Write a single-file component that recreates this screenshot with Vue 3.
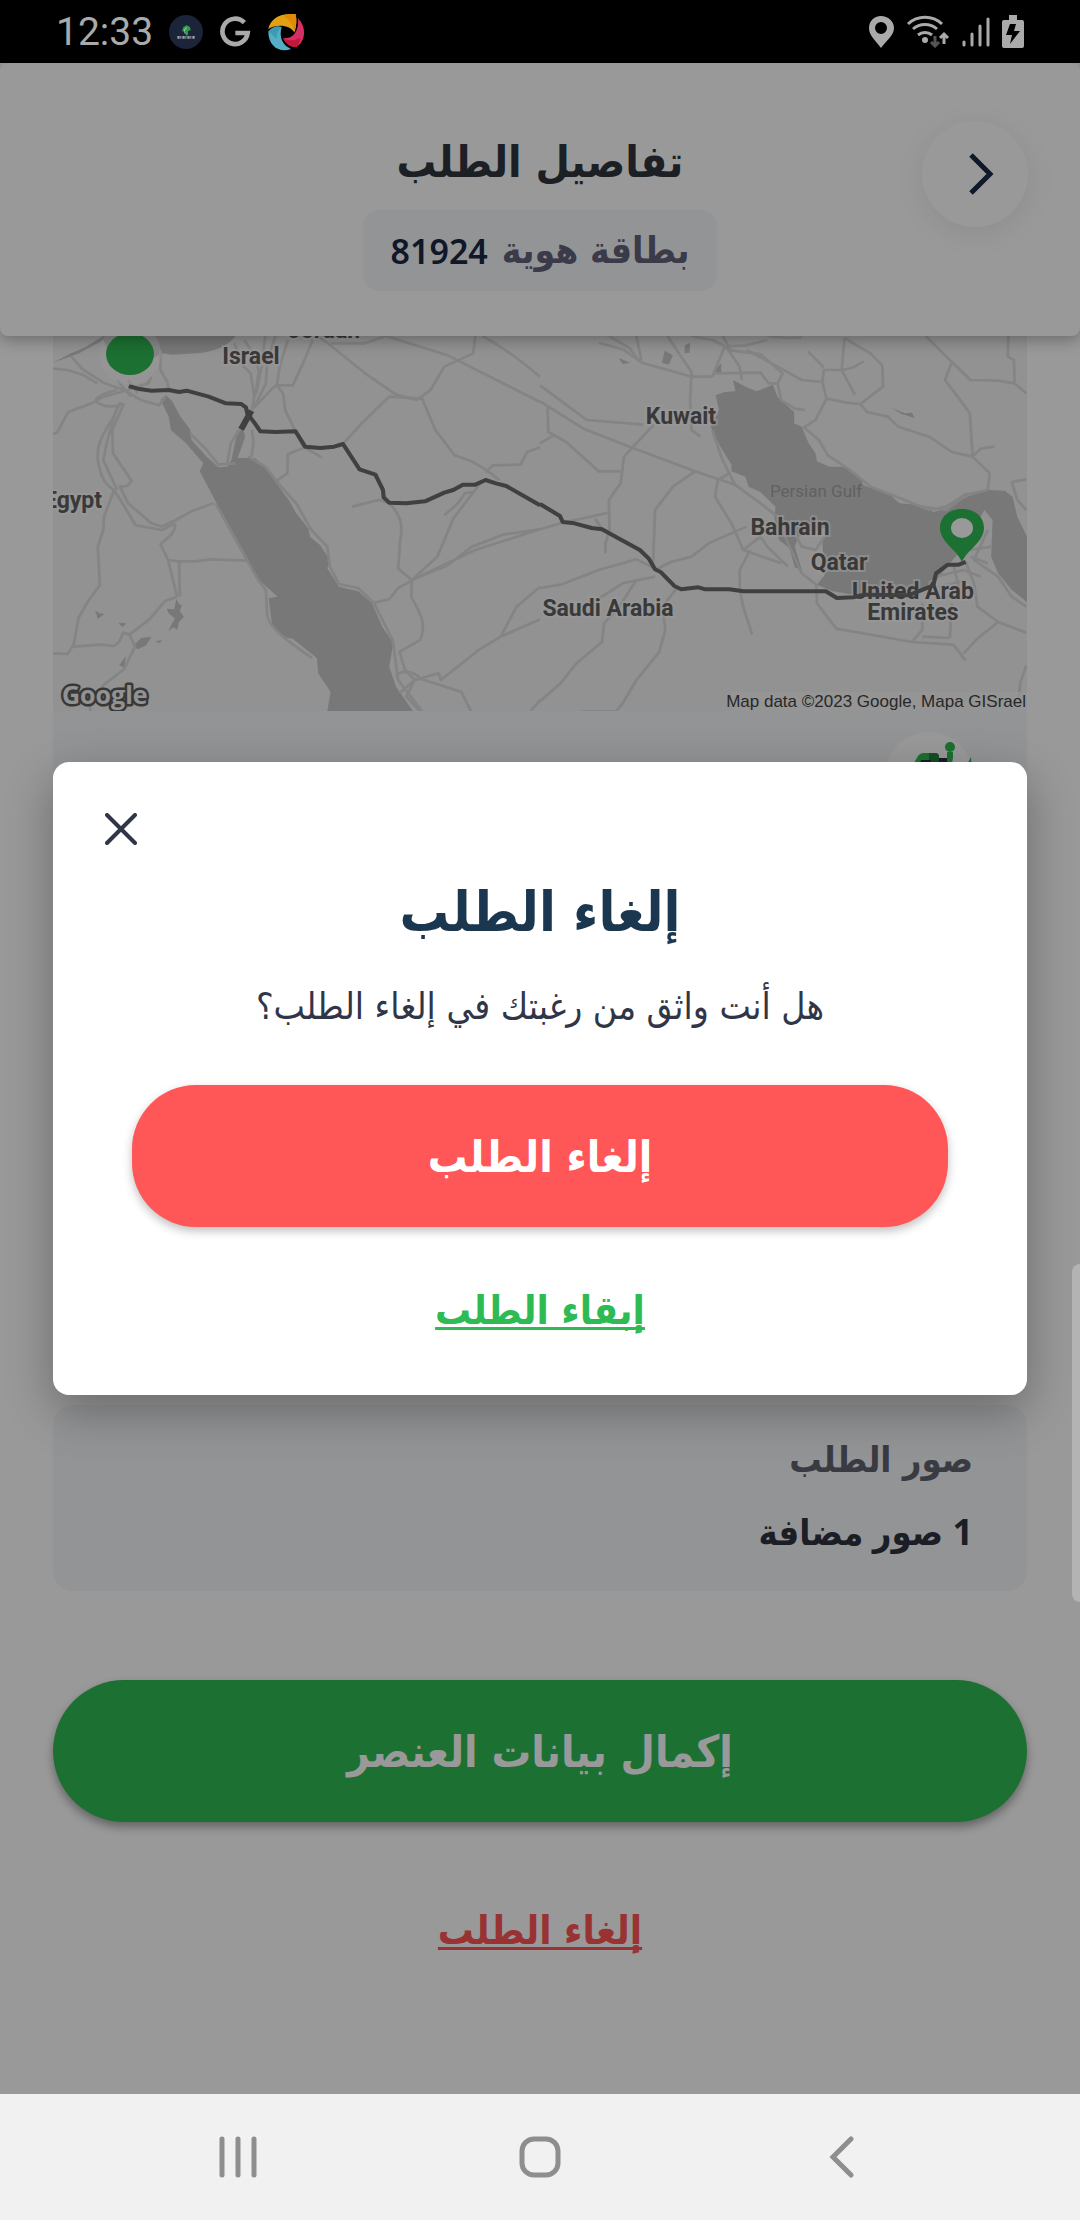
<script setup>
import { ref } from 'vue'

const time = '12:33'
const orderId = '81924'
const modalOpen = ref(true)

const westRoads = [
  'M154 116 L196 120 L240 134 L282 160',
  'M206 78 L240 118 L300 158 L360 180',
  'M340 180 C300 190 270 205 280 215 C300 232 330 232 360 222',
  'M154 312 L166 308 L198 246 L270 218 L300 200 L372 180 L430 160 L440 140',
  'M360 180 L408 210 L462 226 L480 200 M372 150 L400 190 M340 150 L380 200',
  'M466 60 L466 120 L486 156 L490 180',
  'M350 215 L330 262 C300 310 280 340 284 390 C290 430 300 460 330 480 L350 510 L394 586 L470 600 L508 580',
  'M360 220 L326 300 L328 370 L382 452 L370 468 L348 470 L372 520 L440 580 L470 590',
  'M340 230 L312 330 L300 390 L322 440 L340 480',
  'M330 484 L302 560 L300 600 L284 650 L290 766 L258 810 L228 864 L214 944 L196 972 L154 970',
  'M214 950 L290 944 L330 948 L346 936 L358 908 L376 914 L436 866 L480 812 L514 800',
  'M376 914 L392 950 L360 1018 L300 1066 L262 1120 L262 1145',
  'M508 580 C512 610 480 630 466 642 L488 690 L520 694 L522 800 M488 690 L500 740 L514 800',
  'M520 694 L566 694 L612 688 L718 692',
  'M470 590 L510 570 L560 542 L620 520',
  'M680 40 L708 110 L728 130 L738 200 L732 240 M710 30 L740 80 L752 124 L740 200',
  'M770 18 L760 110 L744 190 M800 18 L776 90 L772 160 L738 232 L800 166 L850 166 L880 100 L908 30',
  'M836 30 L812 110 L804 166 L822 190 L828 240 L856 300',
  'M960 40 L1060 40 L1120 18 L1300 76 L1568 216',
  'M920 18 L950 38 L1060 130 L1150 194 L1210 210 L1250 180 L1290 110 L1374 70 L1380 18',
  'M1400 18 C1460 50 1510 90 1568 140',
  'M996 342 L1050 280 L1130 200 L1226 206 L1264 300 L1320 376 L1370 394 L1412 420 L1450 450',
  'M1410 428 L1430 406 L1512 404 L1530 366 L1568 352',
  'M660 400 L670 340 L694 300 M732 300 L736 340 L730 380',
  'M856 300 L880 350 L934 382 M886 352 L836 372 L834 430 L804 452',
  'M552 310 L600 360 L634 404 L684 400',
  'M720 380 L770 410 L816 470 L860 520 L904 600 L950 650 L958 710 L984 762 L1040 774 L1086 820 L1140 930 L1156 1050 L1226 1145',
  'M1022 530 L1100 510 L1130 520 C1160 550 1172 580 1162 630 L1156 716 L1196 750 L1270 680 L1316 566 L1400 452',
  'M1290 556 L1330 520 L1350 490 L1370 486',
  'M1196 750 L1300 706 L1370 650 L1460 614 L1568 598 M1196 750 L1380 660 L1568 598',
  'M1088 818 L1130 808 L1156 774 L1196 752 L1194 800 C1220 850 1240 880 1220 930 L1160 966 L1176 1020 L1204 1050',
  'M1540 1145 L1568 1110 M1454 920 L1500 830 L1568 770 M1568 868 L1454 920 L1390 960 L1280 1050 L1274 1030 L1204 1050',
  'M1150 1040 C1160 1020 1200 1020 1220 1046 L1340 1086 L1368 1145 M1160 1090 L1204 1050 L1180 1100 L1220 1145',
  'M626 520 L690 640 L750 750 L772 780 L776 860 C790 900 830 930 906 984'
]

const eastRoads = [
  'M170 38 L240 58 L300 100 L380 122 L440 140 L500 140',
  'M200 18 L260 54 L290 96 M280 18 L294 90 M370 18 L410 80 L440 126 L436 210 L440 300 L466 320',
  'M440 18 L500 30 L540 50 L580 110 L586 150 M530 18 L556 62 L640 72 L704 130 L690 160',
  'M500 140 L536 50 L600 46 L660 30 M500 130 L640 128 L664 160 L690 160',
  'M600 60 L690 110 L760 150 L820 156 L824 120 L880 120 L910 112 L940 94',
  'M660 18 L720 24 L760 22 M778 64 L824 112 M884 24 L876 120 L914 194',
  'M884 24 L960 70 L994 106 L996 170 L930 222 L890 218 L832 206 L820 156',
  'M930 222 L950 246 L1010 260 L1040 290 L1130 320 L1196 366 L1256 380 L1280 356 L1320 350',
  'M1120 18 L1196 96 L1176 150 L1220 210 L1248 250 L1256 380 L1306 430 L1300 480',
  'M1196 96 L1250 150 L1330 152 L1378 160 L1376 90 L1358 80 L1360 18 M1378 160 L1412 190',
  'M832 206 L800 270 L766 292 L810 330 L836 376 L900 420 L960 470 L1050 506 L1130 540 L1180 530 L1240 490',
  'M690 160 L700 210 L740 236 L770 240 M1412 448 L1370 456 L1386 510 L1412 540',
  'M0 166 L136 270 L300 284 M0 214 L130 298 L270 354 L450 424 L566 464',
  'M22 230 L24 306 L76 336 L170 424 L234 424 M0 340 L40 316',
  'M330 284 L244 380 L234 460 L200 510 L202 600 L190 640 L190 670',
  'M450 424 L386 470 L334 540 L328 710 M0 598 L60 580 L200 548',
  'M160 566 L186 606 M0 774 L60 764 L170 720 L280 688 L334 716 M334 740 L240 760 L174 804',
  'M334 720 L380 696 L440 680 L490 640 L600 590 M550 430 L516 450 L508 500 L556 580 L590 660 L700 700',
  'M500 300 L530 390 L566 464 L640 520 L690 560 L720 640 L760 730 L804 766',
  'M590 660 L640 620 L660 650 L720 710 M580 780 L580 720 L610 660',
  'M580 780 L590 830 L616 914 M280 750 L230 830 L186 880 L180 936 L106 1000 L60 1060 L0 1114',
  'M400 770 L356 830 L364 900 L346 966 L280 1050 L240 1120 L220 1145 L120 1145',
  'M802 766 L804 820 L860 896 L1080 936 L1200 944 L1236 992',
  'M1080 936 L1110 900 L1110 820 M1190 924 L1196 820 M1110 920 L1190 924 M1230 970 L1270 926 L1330 876 L1412 908',
  'M1300 480 L1240 494 L1180 540 L1110 530',
  'M1236 696 L1260 760 L1270 830 L1330 876 M1300 600 L1260 690 L1330 740 L1370 800 L1412 830',
  'M1150 740 L1230 720 L1280 740 M1160 770 L1240 750 M1200 700 L1220 790 L1180 800 M1250 660 L1310 650 M1250 680 L1300 700',
  'M740 610 L760 650 L800 660 L826 620 M1412 1006 L1394 1060 L1390 1110'
]

const labels = [
  { text: 'Jordan', x: 271, y: 2 },
  { text: 'Israel', x: 198, y: 28 },
  { text: 'Egypt', x: 20, y: 172 },
  { text: 'Kuwait', x: 628, y: 88 },
  { text: 'Bahrain', x: 737, y: 199 },
  { text: 'Qatar', x: 786, y: 234 },
  { text: 'Saudi Arabia', x: 555, y: 280 },
  { text: 'United Arab', x: 860, y: 263 },
  { text: 'Emirates', x: 860, y: 284 }
]
</script>

<template>
  <div class="phone">
    <div class="status">
      <div class="status-side">
        <span class="time">{{ time }}</span>
        <svg width="34" height="34" viewBox="27 30 102 102" aria-hidden="true">
          <circle cx="78" cy="81" r="51" fill="#1b2438" />
          <path d="M66 78 L70 66 L80 61 L90 66 L92 76 L84 78 L84 90 L78 92 L76 76 L70 80Z" fill="#2f9c4b" />
          <path d="M80 68 C74 70 72 78 76 86" stroke="#c9ccd2" stroke-width="3" fill="none" />
          <path d="M52 97 H104" stroke="#9a9fab" stroke-width="8" stroke-dasharray="7 2 3 3" />
        </svg>
        <svg width="32" height="32" viewBox="180 32 94 96" aria-hidden="true">
          <path d="M255 52 A38 38 0 1 0 265 83 H228" fill="none" stroke="#aaa" stroke-width="14" />
        </svg>
        <svg width="38" height="38" viewBox="320 22 114 114" aria-hidden="true">
          <path d="M324 70 C330 38 362 20 406 26 C410 46 408 62 402 80 C392 60 352 52 324 70Z" fill="#e2a112" />
          <path d="M370 30 C384 24 396 24 406 26 C410 46 408 62 402 80 C398 58 388 44 370 30Z" fill="#e28a08" />
          <path d="M413 38 C440 64 436 108 408 124 C392 126 376 114 368 98 C400 100 416 76 413 38Z" fill="#d62f63" />
          <path d="M368 98 C384 108 404 104 420 96 C418 110 414 118 408 124 C392 126 376 114 368 98Z" fill="#c2183e" />
          <path d="M324 78 C336 62 352 60 364 64 C356 92 364 118 392 130 C360 142 324 124 324 78Z" fill="#55aec6" />
          <path d="M324 78 C336 62 352 60 364 64 C356 70 350 80 348 100 C340 90 334 84 324 78Z" fill="#3e9ab4" />
        </svg>
      </div>
      <div class="status-side status-right">
        <svg width="27" height="32" viewBox="0 0 27 32" aria-hidden="true">
          <path fill-rule="evenodd" fill="#aaa" d="M13 0 C6 0 1 5 1 12 C1 19 6 23 13 32 C20 23 26 19 26 12 C26 5 20 0 13 0Z M13 6 A6 6 0 1 1 13 18 A6 6 0 1 1 13 6Z" />
        </svg>
        <svg width="43" height="33" viewBox="0 0 43 33" fill="none" aria-hidden="true">
          <g stroke="#aaa" stroke-width="3">
            <path d="M1 9 A25 25 0 0 1 35 9" />
            <path d="M6 14 A18 18 0 0 1 30 14" />
            <path d="M11 20 A11 11 0 0 1 25 20" />
            <path d="M37 29 V19 M33 23 L37 19 L41 23" />
          </g>
          <circle cx="18" cy="25" r="3" fill="#aaa" />
          <path d="M28 21 V30 M24 27 L28 31 L32 27" stroke="#555" stroke-width="3" />
        </svg>
        <svg width="28" height="32" viewBox="0 0 28 32" stroke="#aaa" stroke-width="3" stroke-linecap="round" aria-hidden="true">
          <path d="M2 26 V29 M10 18 V29 M18 10 V29 M26 3 V29" />
        </svg>
        <svg width="22" height="33" viewBox="0 0 22 33" aria-hidden="true">
          <path fill="#aaa" d="M7 0 H15 V5 H20 Q22 5 22 7 V31 Q22 33 20 33 H2 Q0 33 0 31 V7 Q0 5 2 5 H7Z" />
          <path fill="#000" d="M8 9 H14 L12 16 H18 L8 29 L10 20 H4Z" />
        </svg>
      </div>
    </div>

    <div class="stage" dir="rtl">
      <header class="header">
        <button class="back" type="button" aria-label="رجوع">
          <svg width="26" height="42" viewBox="0 0 26 42" fill="none" stroke="#1b2a45" stroke-width="5">
            <path d="M3 2 L22 21 L3 40" />
          </svg>
        </button>
        <div class="heading">
          <h1 class="title">تفاصيل الطلب</h1>
          <p class="chip"><span>بطاقة هوية</span><strong>{{ orderId }}</strong></p>
        </div>
      </header>

      <main class="content">
        <section class="trip">
          <svg class="map" viewBox="0 0 974 375" role="img" aria-label="Map">
            <rect width="974" height="375" fill="#f3f3f3" />
            <g transform="translate(-53 -6) scale(.3444 .3333)">
              <path fill="#c8c8c8" d="M154 98 L206 70 L250 50 L300 18 H684 C660 50 620 66 570 70 L500 74 L470 70 L400 110 L330 90 L300 30 L230 70Z" />
              <path fill="#c8c8c8" d="M466 210 L482 196 L500 214 L524 260 L552 298 L556 330 L600 380 L634 412 L660 410 L672 390 L686 320 L704 290 L712 320 L690 384 L740 384 L770 410 L800 456 L840 512 L860 550 L896 596 L900 620 L930 646 L960 694 L950 714 L984 770 L1040 784 L1080 820 L1110 890 L1142 940 L1130 1010 L1150 1070 L1200 1145 H950 L960 1086 L924 1030 L920 984 L850 926 L826 922 L790 884 L780 804 L806 800 L746 744 L716 680 L626 514 L580 424 L590 400 L540 340 L496 300 L490 260Z" />
              <path fill="#c8c8c8" d="M484 836 L506 838 L512 806 L520 822 L528 826 L522 844 L534 860 L520 876 L514 900 L504 892 L488 904 L500 880 L508 866 L490 850Z M388 946 L410 924 L440 920 L424 946 L400 958Z M450 934 L470 930 L464 940Z M346 1006 L366 978 L360 1012Z M276 840 L288 850 L304 852 L284 866Z M344 878 L366 880 L356 892Z" />
              <g fill="none" stroke="#dcdcdc" stroke-width="8" stroke-linejoin="round">
                <path v-for="(d, i) in westRoads" :key="i" :d="d" />
              </g>
            </g>
            <g transform="translate(487 -6) scale(.3444 .3333)">
              <path fill="#c8c8c8" d="M510 196 L536 186 L568 184 L560 150 L600 172 L630 184 L676 164 L690 200 L738 246 L738 280 L760 290 L780 340 L800 370 L804 394 L840 410 L880 410 L936 450 L936 464 L1020 498 L1044 520 L1110 526 L1142 546 L1180 536 L1240 500 L1300 480 L1350 482 L1372 500 L1386 560 L1414 620 V816 L1370 780 L1330 730 L1310 680 L1314 570 L1290 540 L1240 640 L1190 700 L1144 760 L1100 790 L980 806 L850 784 L804 764 L826 736 L820 640 L836 590 L800 600 L750 620 L740 650 L760 720 L740 712 L724 654 L694 630 L680 560 L684 530 L640 486 L606 470 L596 440 L556 424 L556 404 L524 350 L496 290 L520 240Z" />
              <path fill="#c8c8c8" d="M228 84 L262 98 L240 102Z M362 62 L386 76 L374 104 L354 98Z M420 46 L436 38 L434 68 L420 70Z M1020 234 L1060 250 L1080 248 L1088 264 L1050 252Z M500 130 L526 100 L526 130Z" />
              <g fill="none" stroke="#dcdcdc" stroke-width="8" stroke-linejoin="round">
                <path v-for="(d, i) in eastRoads" :key="i" :d="d" />
              </g>
            </g>
            <text class="sea" x="763" y="161">Persian Gulf</text>
            <g class="places">
              <text v-for="l in labels" :key="l.text" :x="l.x" :y="l.y">{{ l.text }}</text>
            </g>
            <g fill="none" stroke="#6b6b6b" stroke-width="12" stroke-linejoin="round">
              <g transform="translate(-53 -6) scale(.3444 .3333)">
                <path d="M374 168 L400 176 L440 182 L490 180 L520 186 L542 182 L606 200 L656 220 L700 222 L714 232 L718 250 L740 280 L756 304 L800 306 L858 304 L886 350 L930 354 L970 350 L996 342 L1044 418 L1090 434 L1112 480 L1114 502 L1130 518 L1180 520 L1234 514 L1290 488 L1316 480 L1344 464 L1380 464 L1410 450 L1440 460 L1470 468 L1568 526" />
                <path d="M730 242 L700 298" stroke-width="18" />
              </g>
              <path transform="translate(487 -6) scale(.3444 .3333)" d="M0 522 L58 558 L66 576 L100 580 L150 594 L180 598 L230 626 L290 660 L316 686 L334 718 L350 726 L390 768 L410 778 L460 772 L480 778 L550 778 L590 784 L830 784 L862 804 L910 802 L940 794 L1070 796 L1142 766 L1150 730 L1184 704 L1216 704 L1236 696" />
            </g>
            <circle cx="77" cy="18" r="31" fill="#fff" opacity=".4" />
            <ellipse cx="77" cy="18" rx="24" ry="21" fill="#2fbb53" />
            <path fill="#2fbb53" fill-rule="evenodd" d="M909 226 C904 214 887 206 887 192 C887 180 897 173 909 173 C921 173 931 180 931 192 C931 206 914 214 909 226Z" />
            <ellipse cx="909" cy="192" rx="11" ry="10" fill="#fff" />
            <text class="brand" x="9" y="368">Google</text>
            <rect x="678" y="356" width="296" height="19" fill="#fff" opacity=".5" />
            <text class="credit" x="973" y="371">Map data ©2023 Google, Mapa GISrael</text>
          </svg>
          <div class="trip-body">
            <svg class="vehicle" width="88" height="88" viewBox="0 0 88 88" aria-hidden="true">
              <circle cx="44" cy="44" r="44" fill="#fff" />
              <path d="M26 36 L33 24 Q35 21 39 21 H50 Q54 21 54 25 V50 H26Z" fill="#2fbb53" />
              <path d="M44 21 H50 Q54 21 54 25 V36 H44Z" fill="#26803d" />
              <path d="M36 28 H46 V36 H34Z M54 26 H62 V36 H54Z" fill="#2a2c3c" />
              <circle cx="65" cy="15" r="5" fill="#2fbb53" />
              <path d="M62 20 H68 V26 L66 36 H62Z M80 36 L86 25 L87 40Z" fill="#2fbb53" />
            </svg>
          </div>
        </section>

        <section class="photos">
          <h2 class="photos-label">صور الطلب</h2>
          <p class="photos-value">1 صور مضافة</p>
        </section>

        <button class="pill complete" type="button">إكمال بيانات العنصر</button>
        <a class="link cancel" href="#cancel">إلغاء الطلب</a>
      </main>

      <div v-if="modalOpen" class="scrim">
        <div class="thumb"></div>
        <section class="modal" role="dialog" aria-modal="true" aria-labelledby="modal-title">
          <button class="close" type="button" aria-label="إغلاق" @click="modalOpen = false">
            <svg width="32" height="32" viewBox="0 0 32 32" stroke="#303648" stroke-width="4" stroke-linecap="round">
              <path d="M2 2 L30 30 M30 2 L2 30" />
            </svg>
          </button>
          <h2 id="modal-title" class="modal-title">إلغاء الطلب</h2>
          <p class="question">هل أنت واثق من رغبتك في إلغاء الطلب؟</p>
          <button class="pill confirm" type="button">إلغاء الطلب</button>
          <a class="link keep" href="#keep" @click.prevent="modalOpen = false">إبقاء الطلب</a>
        </section>
      </div>
    </div>

    <nav class="nav">
      <button type="button" aria-label="Recents">
        <svg width="40" height="42" viewBox="0 0 40 42" stroke="#8e8e8e" stroke-width="5" stroke-linecap="round">
          <path d="M4 3 V39 M20 3 V39 M36 3 V39" />
        </svg>
      </button>
      <button type="button" aria-label="Home">
        <svg width="42" height="42" viewBox="0 0 42 42" fill="none" stroke="#8e8e8e" stroke-width="5">
          <rect x="3" y="3" width="36" height="36" rx="12" />
        </svg>
      </button>
      <button type="button" aria-label="Back">
        <svg width="26" height="42" viewBox="0 0 26 42" fill="none" stroke="#8e8e8e" stroke-width="5" stroke-linecap="round">
          <path d="M22 3 L4 21 L22 39" />
        </svg>
      </button>
    </nav>
  </div>
</template>

<style>
body { margin: 0; }
</style>

<style scoped>
.phone {
  display: flex;
  flex-direction: column;
  min-height: 100vh;
  font-family: "DejaVu Sans Condensed", "DejaVu Sans", sans-serif;
  background: #fff;
}
h1, h2, p { margin: 0; }
button { border: 0; padding: 0; font-family: inherit; cursor: pointer; }
svg { display: block; }

.status {
  display: flex;
  justify-content: space-between;
  align-items: center;
  height: 63px;
  padding: 0 56px;
  background: #000;
}
.status-side { display: flex; align-items: center; gap: 16px; }
.status-right { gap: 12px; }
.time { font: 400 39px/48px Roboto, sans-serif; color: #aaa; }

.stage {
  position: relative;
  display: flex;
  flex: 1;
  flex-direction: column;
}

.header {
  position: relative;
  z-index: 1;
  display: grid;
  grid-template-columns: 1fr auto 1fr;
  align-items: start;
  padding: 58px 52px 45px;
  border-radius: 8px;
  background: #fff;
  box-shadow: 0 4px 16px rgba(0, 0, 0, .3);
}
.back {
  display: grid;
  place-items: center;
  width: 106px;
  height: 106px;
  padding-left: 12px;
  border-radius: 50%;
  background: #fff;
  box-shadow: 0 6px 30px rgba(0, 0, 0, .08);
}
.heading {
  display: flex;
  flex-direction: column;
  align-items: center;
  gap: 18px;
  padding-top: 11px;
}
.title { font-size: 44px; line-height: 60px; font-weight: 700; color: #30363f; }
.chip {
  display: flex;
  align-items: center;
  gap: 14px;
  height: 81px;
  padding: 0 28px;
  border-radius: 16px;
  background: #f5f7fa;
  font-size: 37px;
  font-weight: 700;
  color: #62627a;
}
.chip strong { font-family: "Noto Sans", sans-serif; font-size: 34px; font-weight: 600; color: #1b2744; }

.content {
  display: flex;
  flex: 1;
  flex-direction: column;
  padding: 0 53px 136px;
}
.trip {
  flex: 1;
  margin-bottom: 40px;
  border-radius: 0 0 20px 20px;
  background: #f5f7fa;
}
.map { width: 100%; height: auto; direction: ltr; }
.places {
  font: 700 23px Roboto, sans-serif;
  text-anchor: middle;
  fill: #606060;
  stroke: #fff;
  stroke-opacity: .6;
  stroke-width: 4px;
  paint-order: stroke;
}
.sea { font: 400 17px Roboto, sans-serif; text-anchor: middle; fill: #a2a2a2; }
.brand {
  font: 700 25px "Open Sans", sans-serif;
  fill: #f3f3f3;
  stroke: #5e5e5e;
  stroke-width: 5px;
  stroke-linejoin: round;
  paint-order: stroke;
}
.credit { font: 400 17px "Liberation Sans", sans-serif; text-anchor: end; fill: #444; }
.trip-body { padding: 21px 54px; }

.photos {
  padding: 28px 54px 32px;
  border-radius: 20px;
  background: #f5f7fa;
}
.photos-label { margin-bottom: 18px; font-size: 36px; line-height: 54px; font-weight: 700; color: #5f616e; }
.photos-value {
  font-family: "Noto Sans", "DejaVu Sans Condensed", sans-serif;
  font-size: 36px;
  line-height: 54px;
  font-weight: 700;
  color: #30323f;
}

.pill {
  width: 100%;
  height: 142px;
  font-size: 44px;
  font-weight: 700;
  color: #fff;
}
.complete {
  margin-top: 89px;
  border-radius: 71px;
  background: #2fbb53;
  box-shadow: 0 5px 10px rgba(0, 0, 0, .35);
}
.link {
  align-self: center;
  font-size: 40px;
  line-height: 56px;
  font-weight: 700;
  text-decoration: underline;
  text-decoration-thickness: 3px;
  text-decoration-skip-ink: none;
  text-underline-offset: 3px;
}
.cancel { margin-top: 80px; color: #ff5555; }

.scrim {
  position: absolute;
  inset: 0;
  z-index: 2;
  display: flex;
  align-items: center;
  padding: 0 53px;
  background: rgba(0, 0, 0, .4);
}
.thumb {
  position: absolute;
  top: 1201px;
  right: 0;
  width: 8px;
  height: 338px;
  border-radius: 8px 0 0 8px;
  background: #b3b3b3;
}
.modal {
  display: flex;
  flex: 1;
  flex-direction: column;
  align-items: center;
  padding: 44px 79px 57px;
  border-radius: 16px;
  background: #fff;
  box-shadow: 0 16px 48px rgba(0, 0, 0, .3);
}
.close {
  display: grid;
  place-items: center;
  align-self: flex-end;
  width: 46px;
  height: 46px;
  margin: 0 0 24px -34px;
  background: none;
}
.modal-title { font-size: 55px; line-height: 72px; font-weight: 700; color: #1b374f; }
.question { margin: 32px 0 51px; font-size: 37px; line-height: 54px; color: #303648; }
.confirm {
  border-radius: 64px;
  background: #ff5757;
  box-shadow: 0 4px 10px rgba(0, 0, 0, .25);
}
.keep { margin-top: 55px; color: #2fbb53; }

.nav {
  display: grid;
  grid-template-columns: repeat(3, 1fr);
  height: 126px;
  padding: 0 8%;
  background: #f1f1f1;
}
.nav button { display: grid; place-items: center; background: none; }
</style>
